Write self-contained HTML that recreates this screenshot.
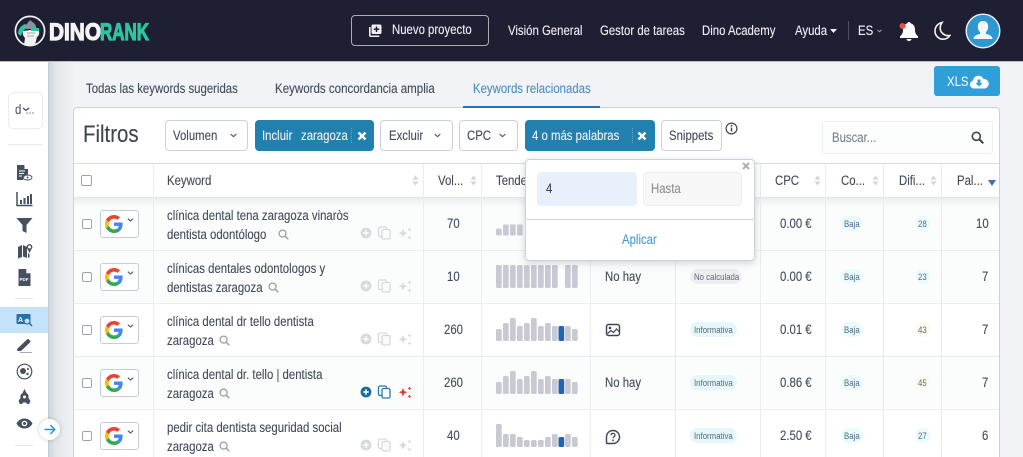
<!DOCTYPE html>
<html lang="es"><head><meta charset="utf-8"><title>DinoRank</title>
<style>
html,body{margin:0;padding:0;width:1023px;height:457px;overflow:hidden;background:#f1f3f6}
body{position:relative;font-family:"Liberation Sans",sans-serif;color:#454d5e}
div,svg,span.a{position:absolute}
.t{position:absolute;white-space:nowrap;line-height:16px;margin-top:1px;font-size:13.5px;transform:scaleX(.843);transform-origin:0 50%;color:#434b5c;-webkit-text-stroke:.12px currentColor}
.w{color:#eef0f4}
.p{position:absolute;border-radius:8px;height:15px}
.s{position:absolute;white-space:nowrap;font-size:9px;line-height:16px;transform:scaleX(.87);transform-origin:0 50%;color:#566880}
.b{position:absolute;box-sizing:border-box;height:31px;top:120px;border:1px solid #c9d0d8;border-radius:4px;background:#fff}
.bl{background:#2280ae;border-color:#2280ae}
.cb{position:absolute;box-sizing:border-box;width:10px;height:10px;border:1px solid #9da3ac;border-radius:2px;background:#fff}
.g{position:absolute;box-sizing:border-box;left:100px;width:39px;height:28px;border:1px solid #c5ccd5;border-radius:3px;background:#fff}
.hl{position:absolute;left:74px;width:925px;height:1px;background:#e9edf1}
.vl{position:absolute;top:164px;width:1px;height:293px;background:#e9edf1}
.r{position:absolute;left:74px;width:925px;height:52px}
.sep{position:absolute;top:128px;height:15px;width:0;border-left:1px dotted rgba(255,255,255,.3)}
</style></head><body>

<svg width="0" height="0" style="position:absolute"><defs>
<symbol id="G" viewBox="0 0 48 48"><path fill="#EA4335" d="M24 9.5c3.54 0 6.71 1.22 9.21 3.6l6.85-6.85C35.9 2.38 30.47 0 24 0 14.62 0 6.51 5.38 2.56 13.22l7.98 6.19C12.43 13.72 17.74 9.5 24 9.5z"/><path fill="#4285F4" d="M46.98 24.55c0-1.57-.15-3.09-.38-4.55H24v9.02h12.94c-.58 2.96-2.26 5.48-4.78 7.18l7.73 6c4.51-4.18 7.09-10.36 7.09-17.65z"/><path fill="#FBBC05" d="M10.53 28.59c-.48-1.45-.76-2.99-.76-4.59s.27-3.14.76-4.59l-7.98-6.19C.92 16.46 0 20.12 0 24c0 3.88.92 7.54 2.56 10.78l7.97-6.19z"/><path fill="#34A853" d="M24 48c6.48 0 11.93-2.13 15.89-5.81l-7.73-6c-2.15 1.45-4.92 2.3-8.16 2.3-6.26 0-11.57-4.22-13.47-9.91l-7.98 6.19C6.51 42.62 14.62 48 24 48z"/></symbol>
<symbol id="so" viewBox="0 0 8 12"><path fill="#d3d8de" d="M4 0l3.5 5H.5zM4 12L.5 7h7z"/></symbol>
<symbol id="mag" viewBox="0 0 12 12"><circle cx="5" cy="5" r="3.8" fill="none" stroke="#9a9fa6" stroke-width="1.4"/><path d="M8 8l3.2 3.2" stroke="#9a9fa6" stroke-width="1.6"/></symbol>
<symbol id="chev" viewBox="0 0 10 6"><path d="M1 1l4 3.6L9 1" fill="none" stroke="#4c5566" stroke-width="1.6"/></symbol>
<symbol id="acts" viewBox="0 0 52 14"><circle cx="6" cy="7" r="5.4" fill="#d6d9dd"/><path d="M3.2 7h5.600M6 4.200v5.600" stroke="#fff" stroke-width="1.500"/><rect x="18.500" y="1" width="8" height="9.500" rx="1.500" fill="none" stroke="#d6d9dd" stroke-width="1.300"/><rect x="22" y="3.500" width="8" height="9.500" rx="1.500" fill="#fafcfc" stroke="#d6d9dd" stroke-width="1.300"/><path d="M43 3l1.300 3 3 1.200-3 1.300-1.300 3-1.300-3-3-1.300 3-1.200zM49.500 1.500l.7 1.200 1.200.7-1.200.7-.7 1.200-.7-1.200-1.200-.7 1.200-.7zM49.500 9.500l.7 1.200 1.200.7-1.200.7-.7 1.200-.7-1.200-1.200-.7 1.200-.7z" fill="#d6d9dd"/></symbol>
</defs></svg>

<!-- sidebar -->
<div style="left:49px;top:61px;width:24px;height:396px;background:linear-gradient(90deg,#cfd5dc 0,#e3e7eb 30%,#eff1f4 100%)"></div>
<div style="left:0;top:61px;width:48px;height:396px;background:#fff;border-right:1px solid #c5ccd4"></div>

<!-- header -->
<div style="left:0;top:0;width:1023px;height:61px;background:#1f1f33;border-bottom:1px solid #b9bec6"></div>
<svg style="left:13px;top:14px" width="36" height="34" viewBox="0 0 36 34">
<circle cx="17" cy="17" r="14.600" fill="#1f1f33" stroke="#f2f2f2" stroke-width="1.700"/>
<path d="M5 20Q5 13 12 10l3 2-5 5-2 5z" fill="#2dc5a0"/>
<path d="M12 12l5-6 5 4 2 5H12z" fill="#8b929b"/>
<path d="M11 31l1-7q-3-3-2-7l15-2q3 5-1 8l-2 8z" fill="#f1f1f1"/>
<path d="M18 14h8v3h-8z" fill="#2dc5a0"/>
<path d="M14 19h8M14 22h7" stroke="#8b929b" stroke-width=".8"/>
</svg>
<svg style="left:48px;top:18px" width="104" height="26" viewBox="0 0 104 26">
<text x="1" y="22" font-family="'Liberation Sans',sans-serif" font-weight="700" font-size="24" fill="#f5f5f5" stroke="#f5f5f5" stroke-width="1.200" textLength="52" lengthAdjust="spacingAndGlyphs">DINO</text>
<text x="52" y="22" font-family="'Liberation Sans',sans-serif" font-weight="700" font-size="24" fill="#2dc5a0" stroke="#2dc5a0" stroke-width="1.200" textLength="49" lengthAdjust="spacingAndGlyphs">RANK</text>
</svg>
<div style="left:351px;top:15px;width:136px;height:29px;border:1px solid #a9adb5;border-radius:4px"></div>
<svg style="left:368px;top:24px" width="14" height="13" viewBox="0 0 14 13"><rect x="3.500" y=".5" width="10" height="9.500" rx="1.500" fill="#f1f1f1"/><path d="M8.500 2.500v5.500M5.800 5.200h5.500" stroke="#1f1f33" stroke-width="1.500"/><path d="M1.800 3v8.300a1 1 0 0 0 1 1h8.500" fill="none" stroke="#f1f1f1" stroke-width="1.600"/></svg>
<span class="t w" style="left:392px;top:21px">Nuevo proyecto</span>
<span class="t w" style="left:508px;top:22px">Visión General</span>
<span class="t w" style="left:600px;top:22px">Gestor de tareas</span>
<span class="t w" style="left:702px;top:22px">Dino Academy</span>
<span class="t w" style="left:795px;top:22px">Ayuda</span>
<svg style="left:830px;top:29px" width="7" height="4" viewBox="0 0 9 5"><path d="M0 0h9L4.500 5z" fill="#eef0f4"/></svg>
<div style="left:848px;top:21px;width:1px;height:19px;background:#4c5263"></div>
<span class="t w" style="left:858px;top:22px">ES</span>
<svg style="left:877px;top:29px" width="5" height="4" viewBox="0 0 10 6"><path d="M1 1l4 3.600L9 1" fill="none" stroke="#a9adb5" stroke-width="1.800"/></svg>
<svg style="left:898px;top:20px" width="22" height="22" viewBox="0 0 22 22"><path d="M11 2c1 0 1.600.6 1.700 1.400C16 4.200 17 7 17 10c0 3 1 4.600 3 6.400V18H2v-1.600C4 14.600 5 13 5 10c0-3 1-5.800 4.300-6.600C9.400 2.600 10 2 11 2zM8.500 19h5c-.2 1.300-1.200 2-2.500 2s-2.300-.7-2.500-2z" fill="#fdfdfd"/><circle cx="4.500" cy="6" r="3" fill="#ee4b4b"/></svg>
<svg style="left:933px;top:21px" width="18" height="20" viewBox="0 0 18 20"><path d="M9 1.500C4.800 2.500 2 5.800 2 10c0 4.600 3.600 8.200 8 8.200 3 0 5.400-1.400 6.800-3.700C11.800 15.500 7 11.500 7.200 7 7.300 4.800 7.900 3 9 1.500z" fill="none" stroke="#f2f2f2" stroke-width="1.600"/></svg>
<svg style="left:965px;top:13px" width="36" height="36" viewBox="0 0 36 36"><circle cx="18" cy="18" r="16.800" fill="#2f97d1" stroke="#f1f3f5" stroke-width="1.400"/><path d="M18 8c3.300 0 5.200 2.400 5.200 5.800 0 2.300-1 4.300-2.300 5.400v1.500c3 .9 6.500 2 6.700 5.300H8.400c.2-3.300 3.700-4.400 6.700-5.300v-1.500c-1.300-1.100-2.300-3.100-2.300-5.400C12.800 10.400 14.700 8 18 8z" fill="#f4f7f9"/></svg>

<!-- XLS -->
<div style="left:934px;top:66px;width:66px;height:30px;background:#2f9ed9;border-radius:3px"></div>
<span class="t" style="left:947px;top:73px;color:#eaf5fb">XLS</span>
<svg style="left:969px;top:74px" width="20" height="15" viewBox="0 0 20 15"><path d="M5 14.500a4 4 0 0 1-1-7.900A5.500 5.500 0 0 1 14.500 5 4.700 4.700 0 0 1 15.500 14.500z" fill="#fff"/><path d="M8.500 5.500h3v3.500h2L10 12.500 6.500 9h2z" fill="#2f9ed9"/></svg>

<!-- tabs -->
<span class="t" style="left:86px;top:80px">Todas las keywords sugeridas</span>
<span class="t" style="left:275px;top:80px;transform:scaleX(.855)">Keywords concordancia amplia</span>
<span class="t" style="left:473px;top:80px;color:#4a8fc4">Keywords relacionadas</span>

<!-- card -->
<div style="left:73px;top:107px;width:925px;height:360px;background:#fff;border:1px solid #c8d3dc;border-radius:4px"></div>
<div style="left:463px;top:106px;width:137px;height:2px;background:#2a70b8"></div>

<span class="t" style="left:83px;top:119px;font-size:24px;line-height:30px;transform:scaleX(.85);color:#3c4353">Filtros</span>

<div class="b" style="left:165px;width:83px"></div>
<span class="t" style="left:173px;top:127px">Volumen</span>
<svg style="left:230px;top:133px;width:7px;height:5px"><use href="#chev"/></svg>

<div class="b bl" style="left:255px;width:119px"></div>
<span class="t w" style="left:262px;top:127px">Incluir</span>
<span class="t w" style="left:301px;top:127px">zaragoza</span>
<div class="sep" style="left:351px"></div>
<svg style="left:357px;top:131px" width="10" height="10" viewBox="0 0 10 10"><path d="M1.500 1.500l7 7M8.500 1.500l-7 7" stroke="#fff" stroke-width="2.400"/></svg>

<div class="b" style="left:380px;width:73px"></div>
<span class="t" style="left:389px;top:127px">Excluir</span>
<svg style="left:434px;top:133px;width:7px;height:5px"><use href="#chev"/></svg>

<div class="b" style="left:459px;width:59px"></div>
<span class="t" style="left:467px;top:127px">CPC</span>
<svg style="left:499px;top:133px;width:7px;height:5px"><use href="#chev"/></svg>

<div class="b bl" style="left:525px;width:130px"></div>
<span class="t w" style="left:532px;top:127px">4 o más palabras</span>
<div class="sep" style="left:632px"></div>
<svg style="left:637px;top:131px" width="10" height="10" viewBox="0 0 10 10"><path d="M1.500 1.500l7 7M8.500 1.500l-7 7" stroke="#fff" stroke-width="2.400"/></svg>

<div class="b" style="left:661px;width:61px"></div>
<span class="t" style="left:669px;top:127px">Snippets</span>
<svg style="left:725px;top:122px" width="13" height="13" viewBox="0 0 13 13"><circle cx="6.500" cy="6.500" r="5.400" fill="none" stroke="#3c4353" stroke-width="1.200"/><path d="M6.500 5.500v4" stroke="#3c4353" stroke-width="1.400"/><circle cx="6.500" cy="3.700" r=".9" fill="#3c4353"/></svg>

<div style="left:822px;top:121px;width:169px;height:31px;background:#fcfdfd;border:1px solid #eceff1;border-radius:3px"></div>
<span class="t" style="left:832px;top:129px;color:#7c828c">Buscar...</span>
<svg style="left:971px;top:131px" width="13" height="13" viewBox="0 0 13 13"><circle cx="5.300" cy="5.300" r="4" fill="none" stroke="#3c4353" stroke-width="1.600"/><path d="M8.500 8.500l3.800 3.800" stroke="#3c4353" stroke-width="2"/></svg>

<!-- table rows bg -->
<div style="left:74px;top:163px;width:925px;height:1px;background:#d3dae0"></div>
<div class="r" style="top:197px;background:#fbfcfc"></div>
<div class="r" style="top:250px;background:#fbfcfc"></div>
<div class="r" style="top:356px;background:#fbfcfc"></div>
<div style="left:74px;top:197px;width:925px;height:10px;background:linear-gradient(180deg,#e8ebee,rgba(240,243,245,0))"></div>
<div class="hl" style="top:197px;background:#e3e7eb"></div>
<div class="hl" style="top:250px"></div>
<div class="hl" style="top:303px"></div>
<div class="hl" style="top:356px"></div>
<div class="hl" style="top:409px"></div>
<div class="vl" style="left:153px"></div>
<div class="vl" style="left:423px"></div>
<div class="vl" style="left:481px"></div>
<div class="vl" style="left:590px"></div>
<div class="vl" style="left:675px"></div>
<div class="vl" style="left:760px"></div>
<div class="vl" style="left:825px"></div>
<div class="vl" style="left:883px"></div>
<div class="vl" style="left:941px"></div>

<!-- table head -->
<div class="cb" style="left:81px;top:175px;width:11px;height:11px"></div>
<span class="t" style="left:167px;top:172px">Keyword</span>
<span class="t" style="left:438px;top:172px">Vol...</span>
<span class="t" style="left:496px;top:172px">Tendencia</span>
<span class="t" style="left:775px;top:172px">CPC</span>
<span class="t" style="left:841px;top:172px">Co...</span>
<span class="t" style="left:899px;top:172px">Difi...</span>
<span class="t" style="left:957px;top:172px">Pal...</span>
<svg style="left:412px;top:175px;width:7px;height:11px"><use href="#so"/></svg>
<svg style="left:470px;top:175px;width:7px;height:11px"><use href="#so"/></svg>
<svg style="left:814px;top:175px;width:7px;height:11px"><use href="#so"/></svg>
<svg style="left:872px;top:175px;width:7px;height:11px"><use href="#so"/></svg>
<svg style="left:930px;top:175px;width:7px;height:11px"><use href="#so"/></svg>
<svg style="left:988px;top:180px" width="8" height="6" viewBox="0 0 8 6"><path d="M0 0h8L4 6z" fill="#3f70b4"/></svg>

<!-- google + checkbox -->
<div class="cb" style="left:82px;top:219px"></div><div class="g" style="top:210px"></div><svg style="left:105px;top:215px;width:18px;height:18px"><use href="#G"/></svg><svg style="left:127px;top:218px;width:7px;height:4px"><use href="#chev"/></svg>
<div class="cb" style="left:82px;top:272px"></div><div class="g" style="top:263px"></div><svg style="left:105px;top:268px;width:18px;height:18px"><use href="#G"/></svg><svg style="left:127px;top:271px;width:7px;height:4px"><use href="#chev"/></svg>
<div class="cb" style="left:82px;top:325px"></div><div class="g" style="top:316px"></div><svg style="left:105px;top:321px;width:18px;height:18px"><use href="#G"/></svg><svg style="left:127px;top:324px;width:7px;height:4px"><use href="#chev"/></svg>
<div class="cb" style="left:82px;top:378px"></div><div class="g" style="top:369px"></div><svg style="left:105px;top:374px;width:18px;height:18px"><use href="#G"/></svg><svg style="left:127px;top:377px;width:7px;height:4px"><use href="#chev"/></svg>
<div class="cb" style="left:82px;top:431px"></div><div class="g" style="top:422px"></div><svg style="left:105px;top:427px;width:18px;height:18px"><use href="#G"/></svg><svg style="left:127px;top:430px;width:7px;height:4px"><use href="#chev"/></svg>

<!-- keywords -->
<span class="t" style="left:167px;top:207px">clínica dental tena zaragoza vinaròs</span>
<span class="t" style="left:167px;top:226px">dentista odontólogo</span>
<svg style="left:278px;top:229px;width:11px;height:11px"><use href="#mag"/></svg>
<svg style="left:360px;top:226px;width:52px;height:14px"><use href="#acts"/></svg>

<span class="t" style="left:167px;top:260px">clínicas dentales odontologos y</span>
<span class="t" style="left:167px;top:279px">dentistas zaragoza</span>
<svg style="left:268px;top:282px;width:11px;height:11px"><use href="#mag"/></svg>
<svg style="left:360px;top:279px;width:52px;height:14px"><use href="#acts"/></svg>

<span class="t" style="left:167px;top:313px">clínica dental dr tello dentista</span>
<span class="t" style="left:167px;top:332px">zaragoza</span>
<svg style="left:219px;top:335px;width:11px;height:11px"><use href="#mag"/></svg>
<svg style="left:360px;top:332px;width:52px;height:14px"><use href="#acts"/></svg>

<span class="t" style="left:167px;top:366px">clínica dental dr. tello | dentista</span>
<span class="t" style="left:167px;top:385px">zaragoza</span>
<svg style="left:219px;top:388px;width:11px;height:11px"><use href="#mag"/></svg>
<svg style="left:360px;top:385px" width="52" height="14" viewBox="0 0 52 14"><circle cx="6" cy="7" r="5.400" fill="#1c6b9c"/><path d="M3.200 7h5.600M6 4.200v5.600" stroke="#fff" stroke-width="1.500"/><rect x="18.500" y="1" width="8" height="9.500" rx="1.500" fill="none" stroke="#2a78ae" stroke-width="1.300"/><rect x="22" y="3.500" width="8" height="9.500" rx="1.500" fill="#fafcfc" stroke="#2a78ae" stroke-width="1.300"/><path d="M43 3l1.300 3 3 1.200-3 1.300-1.300 3-1.300-3-3-1.300 3-1.200zM49.500 1.500l.7 1.200 1.200.7-1.200.7-.7 1.200-.7-1.200-1.200-.7 1.200-.7zM49.500 9.500l.7 1.200 1.200.7-1.200.7-.7 1.200-.7-1.200-1.200-.7 1.200-.7z" fill="#e2402f"/></svg>

<span class="t" style="left:167px;top:419px">pedir cita dentista seguridad social</span>
<span class="t" style="left:167px;top:438px">zaragoza</span>
<svg style="left:219px;top:441px;width:11px;height:11px"><use href="#mag"/></svg>
<svg style="left:360px;top:438px;width:52px;height:14px"><use href="#acts"/></svg>

<!-- volume -->
<span class="t" style="left:447px;top:215px">70</span>
<span class="t" style="left:447px;top:268px">10</span>
<span class="t" style="left:444px;top:321px">260</span>
<span class="t" style="left:444px;top:374px">260</span>
<span class="t" style="left:447px;top:427px">40</span>

<!-- bars -->
<svg style="left:0;top:0" width="1023" height="457" viewBox="0 0 1023 457" fill="#c9c9d3">
<rect x="496" y="228.500" width="5.700" height="7" rx="1.500"/><rect x="503" y="224.500" width="5.700" height="11" rx="1.500"/><rect x="510" y="224.500" width="5.700" height="11" rx="1.500"/><rect x="517" y="224.500" width="5.700" height="11" rx="1.500"/>
<rect x="496" y="265" width="5.700" height="23" rx="1.500"/><rect x="503" y="265" width="5.700" height="23" rx="1.500"/><rect x="510" y="265" width="5.700" height="23" rx="1.500"/><rect x="517" y="265" width="5.700" height="23" rx="1.500"/><rect x="524" y="265" width="5.700" height="23" rx="1.500"/><rect x="531" y="265" width="5.700" height="23" rx="1.500"/><rect x="538" y="265" width="5.700" height="23" rx="1.500"/><rect x="545" y="265" width="5.700" height="23" rx="1.500"/><rect x="552" y="265" width="5.700" height="23" rx="1.500"/><rect x="565" y="265" width="5.700" height="23" rx="1.500"/><rect x="572" y="265" width="5.700" height="23" rx="1.500"/>
<rect x="496" y="329" width="5.700" height="12" rx="1.500"/><rect x="503" y="323" width="5.700" height="18" rx="1.500"/><rect x="510" y="318" width="5.700" height="23" rx="1.500"/><rect x="517" y="326" width="5.700" height="15" rx="1.500"/><rect x="524" y="323" width="5.700" height="18" rx="1.500"/><rect x="531" y="318" width="5.700" height="23" rx="1.500"/><rect x="538" y="326" width="5.700" height="15" rx="1.500"/><rect x="545" y="323" width="5.700" height="18" rx="1.500"/><rect x="552" y="326" width="5.700" height="15" rx="1.500"/><rect x="558.500" y="326" width="5.700" height="15" rx="1.500" fill="#2264b4"/><rect x="565" y="326" width="5.700" height="15" rx="1.500"/><rect x="572" y="329" width="5.700" height="12" rx="1.500"/>
<rect x="496" y="382" width="5.700" height="12" rx="1.500"/><rect x="503" y="376" width="5.700" height="18" rx="1.500"/><rect x="510" y="371" width="5.700" height="23" rx="1.500"/><rect x="517" y="379" width="5.700" height="15" rx="1.500"/><rect x="524" y="376" width="5.700" height="18" rx="1.500"/><rect x="531" y="371" width="5.700" height="23" rx="1.500"/><rect x="538" y="379" width="5.700" height="15" rx="1.500"/><rect x="545" y="376" width="5.700" height="18" rx="1.500"/><rect x="552" y="379" width="5.700" height="15" rx="1.500"/><rect x="558.500" y="379" width="5.700" height="15" rx="1.500" fill="#2264b4"/><rect x="565" y="379" width="5.700" height="15" rx="1.500"/><rect x="572" y="382" width="5.700" height="12" rx="1.500"/>
<rect x="496" y="424" width="5.700" height="23" rx="1.500"/><rect x="503" y="434" width="5.700" height="13" rx="1.500"/><rect x="510" y="434" width="5.700" height="13" rx="1.500"/><rect x="517" y="437" width="5.700" height="10" rx="1.500"/><rect x="524" y="440" width="5.700" height="7" rx="1.500"/><rect x="531" y="440" width="5.700" height="7" rx="1.500"/><rect x="538" y="440" width="5.700" height="7" rx="1.500"/><rect x="545" y="437" width="5.700" height="10" rx="1.500"/><rect x="552" y="434" width="5.700" height="13" rx="1.500"/><rect x="558.500" y="437" width="5.700" height="10" rx="1.500" fill="#2264b4"/><rect x="565" y="434" width="5.700" height="13" rx="1.500"/><rect x="572" y="437" width="5.700" height="10" rx="1.500"/>
</svg>

<!-- snippets column -->
<span class="t" style="left:605px;top:268px">No hay</span>
<svg style="left:605px;top:323px" width="16" height="14" viewBox="0 0 16 14"><rect x="1.500" y="1.500" width="13" height="11" rx="2" fill="none" stroke="#3c4353" stroke-width="1.400"/><circle cx="5" cy="5" r="1.300" fill="#3c4353"/><path d="M2.500 10.500L6 7.500l2.500 2 3-3.500 3 3" fill="none" stroke="#3c4353" stroke-width="1.200"/></svg>
<span class="t" style="left:605px;top:374px">No hay</span>
<svg style="left:605px;top:429px" width="16" height="16" viewBox="0 0 16 16"><path d="M8 1.500a6.500 6.500 0 0 1 0 13H2.300c-.5 0-.8-.3-.8-.8V8A6.500 6.500 0 0 1 8 1.500z" fill="none" stroke="#3c4353" stroke-width="1.400"/><path d="M6 6.300C6 5 7 4.400 8 4.400s2 .7 2 1.800c0 1.400-2 1.500-2 3" fill="none" stroke="#3c4353" stroke-width="1.300"/><circle cx="8" cy="11.300" r=".9" fill="#3c4353"/></svg>

<!-- intent -->
<div class="p" style="left:690px;top:269px;width:52px;background:#eeeeef"></div><span class="s" style="left:694px;top:269px">No calculada</span>
<div class="p" style="left:690px;top:322px;width:47px;background:#e5f7f8"></div><span class="s" style="left:694px;top:322px">Informativa</span>
<div class="p" style="left:690px;top:375px;width:47px;background:#e5f7f8"></div><span class="s" style="left:694px;top:375px">Informativa</span>
<div class="p" style="left:690px;top:428px;width:47px;background:#e5f7f8"></div><span class="s" style="left:694px;top:428px">Informativa</span>

<!-- cpc -->
<span class="t" style="left:780px;top:215px">0.00 €</span>
<span class="t" style="left:780px;top:268px">0.00 €</span>
<span class="t" style="left:780px;top:321px">0.01 €</span>
<span class="t" style="left:780px;top:374px">0.86 €</span>
<span class="t" style="left:780px;top:427px">2.50 €</span>

<!-- competencia -->
<div class="p" style="left:841px;top:216px;width:22px;background:#e8fbfd"></div><span class="s" style="left:844px;top:216px">Baja</span>
<div class="p" style="left:841px;top:269px;width:22px;background:#e8fbfd"></div><span class="s" style="left:844px;top:269px">Baja</span>
<div class="p" style="left:841px;top:322px;width:22px;background:#e8fbfd"></div><span class="s" style="left:844px;top:322px">Baja</span>
<div class="p" style="left:841px;top:375px;width:22px;background:#e8fbfd"></div><span class="s" style="left:844px;top:375px">Baja</span>
<div class="p" style="left:841px;top:428px;width:22px;background:#e8fbfd"></div><span class="s" style="left:844px;top:428px">Baja</span>

<!-- dificultad -->
<div class="p" style="left:916px;top:216px;width:14px;background:#e8fbfd"></div><span class="s" style="left:918px;top:216px">28</span>
<div class="p" style="left:916px;top:269px;width:14px;background:#e8fbfd"></div><span class="s" style="left:918px;top:269px">23</span>
<div class="p" style="left:916px;top:322px;width:14px;background:#fefbec"></div><span class="s" style="left:918px;top:322px">43</span>
<div class="p" style="left:916px;top:375px;width:14px;background:#fefbec"></div><span class="s" style="left:918px;top:375px">45</span>
<div class="p" style="left:916px;top:428px;width:14px;background:#e8fbfd"></div><span class="s" style="left:918px;top:428px">27</span>

<!-- palabras -->
<span class="t" style="left:976px;top:215px">10</span>
<span class="t" style="left:982px;top:268px">7</span>
<span class="t" style="left:982px;top:321px">7</span>
<span class="t" style="left:982px;top:374px">7</span>
<span class="t" style="left:982px;top:427px">6</span>

<!-- popover -->
<div style="left:525px;top:159px;width:228px;height:100px;background:#fff;border:1px solid #c8d3dc;border-radius:4px;box-shadow:0 2px 8px rgba(90,110,130,.28)"></div>
<div style="left:537px;top:172px;width:100px;height:34px;background:#e8f0fb;border-radius:4px"></div>
<span class="t" style="left:546px;top:180px;color:#3c4353">4</span>
<div style="left:643px;top:172px;width:97px;height:32px;background:#f7f7f7;border:1px solid #eeeeee;border-radius:4px"></div>
<span class="t" style="left:651px;top:180px;color:#8a8f97">Hasta</span>
<div style="left:526px;top:219px;width:228px;height:1px;background:#cfd7dd"></div>
<span class="t" style="left:622px;top:231px;color:#4a9ac9">Aplicar</span>
<svg style="left:742px;top:162px" width="8" height="8" viewBox="0 0 8 8"><path d="M1 1l6 6M7 1L1 7" stroke="#aab0b7" stroke-width="2"/></svg>

<!-- sidebar content -->
<div style="left:8px;top:92px;width:33px;height:35px;background:#fff;border:1px solid #e9ebee;border-radius:5px"></div>
<span class="t" style="left:15px;top:101px;color:#555c6a">d</span>
<svg style="left:23px;top:107px" width="11" height="8" viewBox="0 0 11 8"><path d="M0 1l3 2.500L6 1" fill="none" stroke="#3c4353" stroke-width="1.200"/><circle cx="4" cy="6" r=".6" fill="#3c4353"/><circle cx="7" cy="6" r=".6" fill="#3c4353"/><circle cx="10" cy="6" r=".6" fill="#3c4353"/></svg>
<div style="left:8px;top:144px;width:34px;height:1px;background:#e8ebee"></div>

<svg style="left:15px;top:164px" width="18" height="18" viewBox="0 0 18 18" fill="#46505f"><path d="M2 1h7l4 4v6a5 5 0 0 0-5 5H2z"/><path d="M9.500 1v4h3.500z" fill="#fff"/><path d="M4 7h6M4 9.500h5M4 12h3" stroke="#fff"/><ellipse cx="12.500" cy="13.500" rx="4.500" ry="2.500" fill="none" stroke="#46505f"/><circle cx="12.500" cy="13.500" r="1"/></svg>
<svg style="left:16px;top:191px" width="17" height="16" viewBox="0 0 17 16"><path d="M1 1v13.500h15.500" fill="none" stroke="#46505f" stroke-width="1.500"/><path d="M4 9h2v4H4zM7.500 7h2v6h-2zM11 5h2v8h-2zM14 3h2v10h-2z" fill="#46505f"/></svg>
<svg style="left:16px;top:217px" width="17" height="17" viewBox="0 0 17 17"><path d="M.5 1h16l-6 7v8l-4-2V8z" fill="#46505f"/></svg>
<svg style="left:17px;top:243px" width="16" height="16" viewBox="0 0 16 16"><path d="M1 4l4-2v12l-4 1.500zM6 2l4 2v11l-4-1.500z" fill="#46505f"/><path d="M11 10v5l1.500-.7V11z" fill="#46505f"/><circle cx="12.500" cy="4" r="2.200" fill="none" stroke="#46505f" stroke-width="1.400"/><path d="M12.500 10l-2-4h4z" fill="#46505f"/></svg>
<svg style="left:18px;top:269px" width="13" height="17" viewBox="0 0 13 17"><path d="M.5 0H8l4.500 4.500V17H.5z" fill="#46505f"/><path d="M8.300 .3v4h4z" fill="#fff"/><text x="1.500" y="12" font-family="'Liberation Sans',sans-serif" font-weight="700" font-size="4.500" fill="#fff">PDF</text></svg>
<div style="left:15px;top:298px;width:18px;height:1px;background:#e2e5e9"></div>
<div style="left:0;top:307px;width:48px;height:26px;background:#c4e3fb"></div>
<svg style="left:16px;top:313px" width="17" height="14" viewBox="0 0 17 14"><rect x=".5" y="1" width="14" height="10" rx="1" fill="#2372a6"/><text x="2" y="9" font-family="'Liberation Sans',sans-serif" font-weight="700" font-size="7" fill="#fff">A</text><circle cx="11" cy="8" r="3" fill="#c4e3fb" stroke="#2372a6" stroke-width="1.200"/><path d="M13 10l3 3" stroke="#2372a6" stroke-width="1.500"/></svg>
<svg style="left:16px;top:338px" width="17" height="16" viewBox="0 0 17 16"><path d="M1 11L11 1.500c.6-.6 1.300-.6 2 0l1 1c.6.700.6 1.400 0 2L5 13H1.500z" fill="#46505f"/><path d="M4 14.500h12" stroke="#a8adb5" stroke-width="1"/></svg>
<svg style="left:16px;top:363px" width="17" height="17" viewBox="0 0 17 17"><circle cx="8.500" cy="8.500" r="7.300" fill="none" stroke="#46505f" stroke-width="1.200"/><circle cx="7" cy="8" r="3" fill="#46505f"/><circle cx="12" cy="6" r="1" fill="#46505f"/><circle cx="11.500" cy="11" r="1.200" fill="#46505f"/></svg>
<svg style="left:18px;top:389px" width="13" height="17" viewBox="0 0 13 17"><path d="M6.500 0l2 4 2 2v3l2 3-1.500 3H9l-1-1.500H5L4 15H2L.5 12l2-3V6l2-2z" fill="#46505f"/><circle cx="6.500" cy="8" r="1.500" fill="#fff"/></svg>
<svg style="left:16px;top:418px" width="17" height="11" viewBox="0 0 17 11"><path d="M.5 5.500C2.500 2 5.300.5 8.500.5s6 1.500 8 5c-2 3.500-4.800 5-8 5s-6-1.500-8-5z" fill="#46505f"/><circle cx="8.500" cy="5.500" r="2.800" fill="#fff"/><circle cx="8.500" cy="5.500" r="1.500" fill="#46505f"/></svg>
<div style="left:15px;top:445px;width:18px;height:1px;background:#e2e5e9"></div>
<div style="left:39px;top:419px;width:21px;height:21px;background:#fff;border-radius:50%;box-shadow:0 0 4px rgba(90,110,130,.35)"></div>
<svg style="left:44px;top:424px" width="12" height="11" viewBox="0 0 12 11"><path d="M.5 5.500h10M6.500 1l4.300 4.500L6.500 10" fill="none" stroke="#2f8fcb" stroke-width="1.400"/></svg>

</body></html>
